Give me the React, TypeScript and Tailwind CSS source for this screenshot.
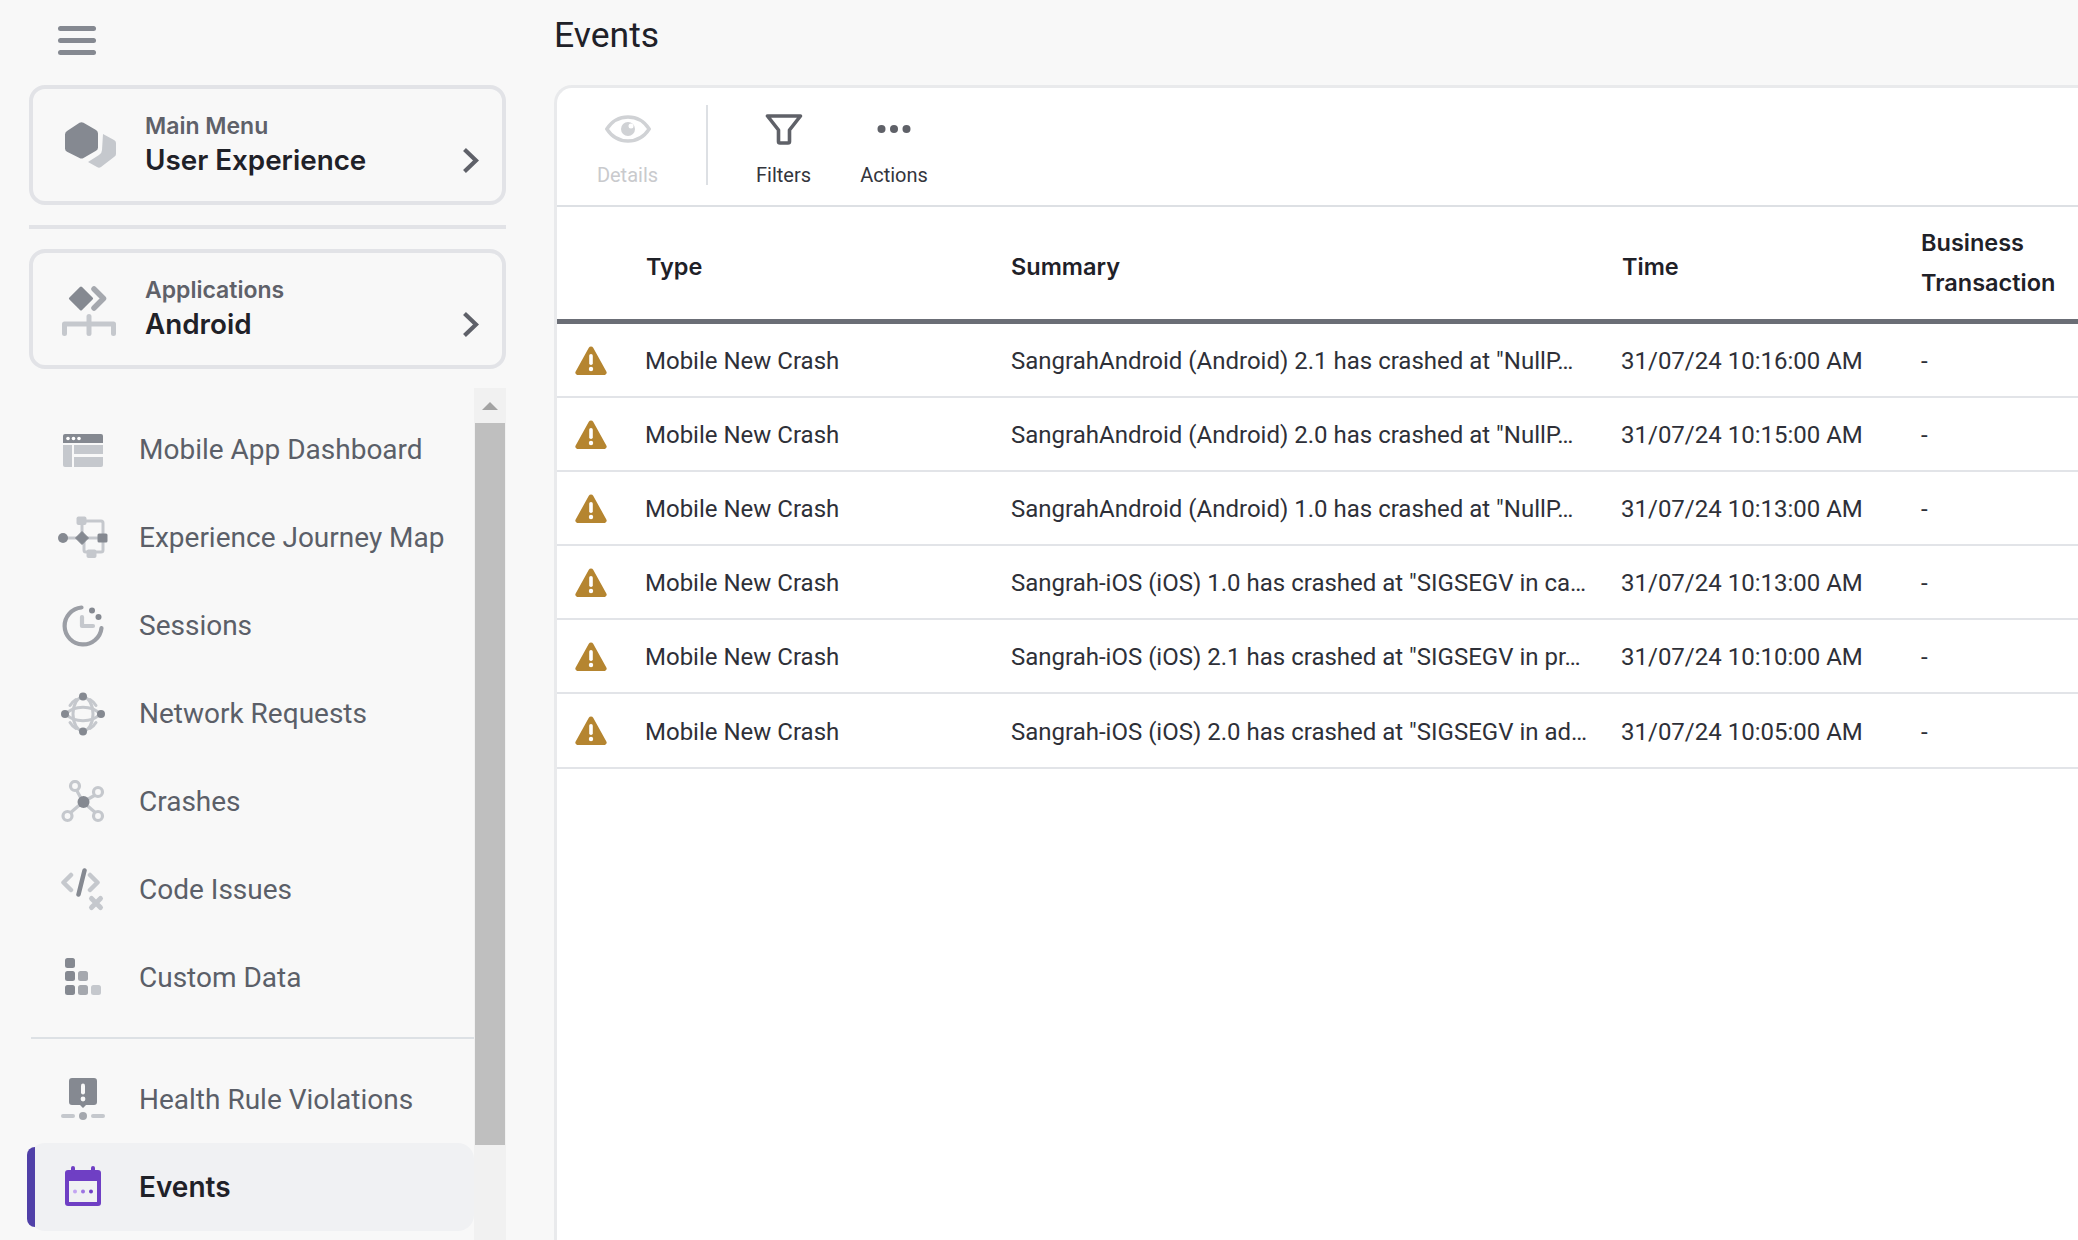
import type { ReactNode } from "react"

const dark = "#858991"
const mid = "#a5a8ae"
const light = "#c5c8cd"

function DashboardIcon() {
  return (
    <svg width="44" height="44" viewBox="0 0 44 44">
      <path d="M2 8a2 2 0 0 1 2-2h36a2 2 0 0 1 2 2v7H2z" fill={dark} />
      <circle cx="7" cy="10.500" r="1.800" fill="#fff" />
      <circle cx="12.500" cy="10.500" r="1.800" fill="#fff" />
      <circle cx="18" cy="10.500" r="1.800" fill="#fff" />
      <path d="M2 17h9v22H4a2 2 0 0 1-2-2z" fill={light} />
      <rect x="13" y="17" width="29" height="9" fill={light} />
      <path d="M13 29h29v8a2 2 0 0 1-2 2H13z" fill={light} />
    </svg>
  )
}

function JourneyIcon() {
  return (
    <svg width="50" height="44" viewBox="0 0 50 44">
      <path d="M26 5h17a2 2 0 0 1 2 2v27a2 2 0 0 1-2 2H28a2 2 0 0 1-2-2v-9M24 21V5" fill="none" stroke={light} strokeWidth="3" />
      <path d="M6 22h40" stroke={light} strokeWidth="3" />
      <circle cx="5" cy="22" r="5" fill={dark} />
      <path d="M24 15.500l6.500 6.500-6.500 6.500-6.500-6.500z" fill={dark} stroke={dark} strokeLinejoin="round" />
      <rect x="39.500" y="17.500" width="10" height="9" rx="1.500" fill={dark} />
      <rect x="18.500" y="0.500" width="10" height="8.500" rx="2" fill={light} />
      <rect x="28.500" y="33.500" width="10" height="8.500" rx="2" fill={light} />
    </svg>
  )
}

function SessionsIcon() {
  return (
    <svg width="44" height="44" viewBox="0 0 44 44">
      <path d="M20.500 3.500A18.500 18.500 0 1 0 40.500 24" fill="none" stroke="#9b9ea5" strokeWidth="4.200" strokeLinecap="round" />
      <path d="M21 13v9h11" fill="none" stroke={light} strokeWidth="4.200" strokeLinecap="round" strokeLinejoin="round" />
      <circle cx="31" cy="6.500" r="3" fill={dark} />
      <circle cx="37.500" cy="13" r="3" fill={dark} />
    </svg>
  )
}

function NetworkIcon() {
  return (
    <svg width="44" height="44" viewBox="0 0 44 44">
      <g fill="none" stroke={light} strokeWidth="3" strokeLinecap="round">
        <path d="M9 13.500C10.500 11 12.500 9 15 7.500M29 7.500C31.500 9 33.500 11 35 13.500M9 30.500C10.500 33 12.500 35 15 36.500M29 36.500C31.500 35 33.500 33 35 30.500" />
        <ellipse cx="22" cy="22" rx="10" ry="17" />
        <path d="M5 22C13 13 31 13 39 22M5 22C13 31 31 31 39 22" />
      </g>
      <circle cx="22" cy="4.500" r="4" fill={dark} />
      <circle cx="22" cy="39.500" r="4" fill={dark} />
      <circle cx="4" cy="22" r="4" fill={dark} />
      <circle cx="40" cy="22" r="4" fill={dark} />
    </svg>
  )
}

function CrashesIcon() {
  return (
    <svg width="44" height="44" viewBox="0 0 44 44" fill="none" stroke={light} strokeWidth="3.200">
      <path d="M22 22L15 9M22 22l14-8M22 22L8 34M22 22l14 12" />
      <circle cx="14" cy="6" r="4.500" fill="#f8f8f8" />
      <circle cx="37" cy="12" r="4.500" fill="#f8f8f8" />
      <circle cx="6.500" cy="36" r="4.500" fill="#f8f8f8" />
      <circle cx="37" cy="36" r="4.500" fill="#f8f8f8" />
      <circle cx="22.500" cy="22" r="6" fill={dark} stroke="none" />
    </svg>
  )
}

function CodeIcon() {
  return (
    <svg width="44" height="44" viewBox="0 0 44 44" fill="none" strokeLinecap="round" strokeLinejoin="round">
      <path d="M10 7l-7.500 7.500 7.500 7.500M29 7l7.500 7.500-7.500 7.500" stroke={light} strokeWidth="4.500" />
      <path d="M23.500 2.500l-6 24" stroke={dark} strokeWidth="4.500" />
      <path d="M30.500 30.500l9 9M39.500 30.500l-9 9" stroke={light} strokeWidth="5" />
    </svg>
  )
}

function CustomDataIcon() {
  return (
    <svg width="44" height="44" viewBox="0 0 44 44">
      <rect x="4" y="2" width="10" height="10" rx="2.500" fill={dark} />
      <rect x="4" y="15" width="10" height="10" rx="2.500" fill={dark} />
      <rect x="17" y="15" width="10" height="10" rx="2.500" fill={mid} />
      <rect x="4" y="29" width="10" height="10" rx="2.500" fill={dark} />
      <rect x="17" y="29" width="10" height="10" rx="2.500" fill={mid} />
      <rect x="30" y="29" width="10" height="10" rx="2.500" fill={light} />
    </svg>
  )
}

function HealthIcon() {
  return (
    <svg width="44" height="46" viewBox="0 0 44 46">
      <path d="M11 1h22a3 3 0 0 1 3 3v21a3 3 0 0 1-3 3h-8l-3 3-3-3h-8a3 3 0 0 1-3-3V4a3 3 0 0 1 3-3z" fill={dark} />
      <rect x="20" y="6.500" width="4" height="11" rx="2" fill="#f8f8f8" />
      <circle cx="22" cy="22" r="2.400" fill="#f8f8f8" />
      <rect x="0" y="37" width="14" height="4" rx="2" fill={light} />
      <rect x="30" y="37" width="14" height="4" rx="2" fill={light} />
      <circle cx="22" cy="39" r="4" fill={mid} />
    </svg>
  )
}

function EventsIcon() {
  return (
    <svg width="44" height="44" viewBox="0 0 44 44">
      <rect x="4" y="5" width="36" height="36" rx="3" fill="#6f3fc4" />
      <rect x="10" y="1" width="4" height="8" rx="2" fill="#6f3fc4" />
      <rect x="30" y="1" width="4" height="8" rx="2" fill="#6f3fc4" />
      <rect x="8" y="16" width="28" height="21" fill="#f0f1f3" />
      <circle cx="14" cy="26.500" r="2" fill="#c3a5f2" />
      <circle cx="22" cy="26.500" r="2" fill="#9c74e2" />
      <circle cx="30" cy="26.500" r="2" fill="#6f3fc4" />
    </svg>
  )
}

function HexIcon() {
  return (
    <svg width="54" height="46" viewBox="-3 0 54 46">
      <path d="M38 12l11 6q2 1.200 2 3v11q0 2-2 3L36 45q-2 1.500-4 0l-9-5 11-7q3-2 3-5z" fill={light} />
      <path d="M14.500 0.800q2-1 4 0l12.500 7.200q2 1.200 2 3.400v14q0 2.200-2 3.400l-12.500 7.200q-2 1-4 0L2 29.800q-2-1.200-2-3.400v-14q0-2.200 2-3.400z" fill={dark} />
    </svg>
  )
}

function AppsIcon() {
  return (
    <svg width="54" height="50" viewBox="0 0 54 50" fill="none" className="mt-[4px]">
      <path d="M19 2l10.500 10.500L19 23 8.500 12.500z" fill={dark} stroke={dark} strokeWidth="3" strokeLinejoin="round" />
      <path d="M32 3l9.500 9.500L32 22" stroke={mid} strokeWidth="5.500" strokeLinejoin="round" strokeLinecap="round" />
      <path d="M2.500 47.500V38h49v9.500M27 30.500v17" stroke={light} strokeWidth="5" strokeLinecap="round" strokeLinejoin="round" />
    </svg>
  )
}

function Chevron() {
  return (
    <svg width="17" height="27" viewBox="0 0 17 27" fill="none" className="mt-[31px] shrink-0">
      <path d="M2.500 2.500L14 13.500 2.500 24.500" stroke="#5f6169" strokeWidth="4.200" />
    </svg>
  )
}

function WarningIcon() {
  return (
    <svg width="32" height="29" viewBox="0 0 32 29">
      <path d="M13.800 1.800a2.600 2.600 0 0 1 4.400 0l13 23.400A2.400 2.400 0 0 1 29 29H3a2.400 2.400 0 0 1-2.200-3.800z" fill="#b58530" />
      <rect x="14.200" y="8" width="3.600" height="11" rx="1.800" fill="#fff" />
      <circle cx="16" cy="23" r="2.200" fill="#fff" />
    </svg>
  )
}

function EyeIcon() {
  return (
    <svg width="46" height="28" viewBox="0 0 46 28">
      <path d="M1.800 14C7 6 14 2 23 2s16 4 21.200 12C39 22 32 26 23 26S7 22 1.800 14z" fill="none" stroke="#d0d2d5" strokeWidth="3.400" />
      <circle cx="23" cy="14" r="7" fill="#d0d2d5" />
      <circle cx="26" cy="11" r="2.500" fill="#fff" />
    </svg>
  )
}

function FilterIcon() {
  return (
    <svg width="38" height="32" viewBox="0 0 38 32" fill="none">
      <path d="M2.500 3h33L24.500 17v11.500a1.500 1.500 0 0 1-1.500 1.500h-8a1.500 1.500 0 0 1-1.500-1.500V17z" stroke="#5f6168" strokeWidth="3.600" strokeLinejoin="round" />
    </svg>
  )
}

function DotsIcon() {
  return (
    <svg width="34" height="10" viewBox="0 0 34 10">
      <circle cx="4.500" cy="5" r="4" fill="#5f6168" />
      <circle cx="17" cy="5" r="4" fill="#5f6168" />
      <circle cx="29.500" cy="5" r="4" fill="#5f6168" />
    </svg>
  )
}

function SwitcherCard({ icon, label, title }: { icon: ReactNode; label: string; title: string }) {
  return (
    <div className="h-[120px] rounded-[16px] border-[4px] border-[#e2e3e7] flex items-center pl-[29px] pr-[23px]">
      <div className="w-[54px] flex justify-center shrink-0">{icon}</div>
      <div className="ml-[29px] flex-1 -mt-[2px] font-['Inter',sans-serif] font-semibold">
        <div className="text-[23px] leading-[32px] text-[#5f6169]">{label}</div>
        <div className="text-[27.800px] leading-[36px] text-[#1f2128]">{title}</div>
      </div>
      <Chevron />
    </div>
  )
}

function NavItem({ icon, label }: { icon: ReactNode; label: string }) {
  return (
    <div className="h-[88px] flex items-center">
      <div className="w-[108px] mr-[2px] flex justify-center shrink-0">{icon}</div>
      <span className="text-[28px] text-[#5b5f68]">{label}</span>
    </div>
  )
}

const rows = [
  { summary: 'SangrahAndroid (Android) 2.1 has crashed at "NullP…', time: "31/07/24 10:16:00 AM" },
  { summary: 'SangrahAndroid (Android) 2.0 has crashed at "NullP…', time: "31/07/24 10:15:00 AM" },
  { summary: 'SangrahAndroid (Android) 1.0 has crashed at "NullP…', time: "31/07/24 10:13:00 AM" },
  { summary: 'Sangrah-iOS (iOS) 1.0 has crashed at "SIGSEGV in ca…', time: "31/07/24 10:13:00 AM" },
  { summary: 'Sangrah-iOS (iOS) 2.1 has crashed at "SIGSEGV in pr…', time: "31/07/24 10:10:00 AM" },
  { summary: 'Sangrah-iOS (iOS) 2.0 has crashed at "SIGSEGV in ad…', time: "31/07/24 10:05:00 AM" },
]

const gridCols = "grid grid-cols-[89px_365px_611px_299px_1fr] items-center"

export default function App() {
  return (
    <div className="h-[1240px] w-[2078px] overflow-hidden flex bg-[#f8f8f8] font-['Roboto',sans-serif]">
      <aside className="w-[554px] shrink-0 flex flex-col pl-[29px]">
        <div className="w-[477px] h-[85px] shrink-0 pl-[29px] pt-[26px]">
          <div className="w-[38px] flex flex-col gap-[7px]">
            <div className="h-[5px] rounded-full bg-[#858991]" />
            <div className="h-[5px] rounded-full bg-[#858991]" />
            <div className="h-[5px] rounded-full bg-[#858991]" />
          </div>
        </div>
        <div className="w-[477px]">
          <SwitcherCard icon={<HexIcon />} label="Main Menu" title="User Experience" />
          <div className="h-[4px] bg-[#e2e3e7] mt-[20px] mb-[20px]" />
          <SwitcherCard icon={<AppsIcon />} label="Applications" title="Android" />
        </div>
        <div className="w-[477px] mt-[19px] flex-1 flex min-h-0">
          <nav className="w-[445px] pt-[18px]">
            <NavItem icon={<DashboardIcon />} label="Mobile App Dashboard" />
            <NavItem icon={<JourneyIcon />} label="Experience Journey Map" />
            <NavItem icon={<SessionsIcon />} label="Sessions" />
            <NavItem icon={<NetworkIcon />} label="Network Requests" />
            <NavItem icon={<CrashesIcon />} label="Crashes" />
            <NavItem icon={<CodeIcon />} label="Code Issues" />
            <NavItem icon={<CustomDataIcon />} label="Custom Data" />
            <div className="h-[2px] bg-[#dde1e5] mt-[15px] mb-[17px] ml-[2px]" />
            <NavItem icon={<HealthIcon />} label="Health Rule Violations" />
            <div className="relative h-[88px] -mt-[1px] rounded-[16px] bg-[#f0f1f3] flex items-center">
              <div className="absolute -left-[2px] top-[4px] bottom-[4px] w-[8px] rounded-l-full bg-[#5040a8]" />
              <div className="w-[108px] mr-[2px] flex justify-center shrink-0">
                <EventsIcon />
              </div>
              <span className="text-[28px] font-semibold font-['Inter',sans-serif] text-[#1f2128]">Events</span>
            </div>
          </nav>
          <div className="w-[32px] bg-[#f1f1f1] flex flex-col items-center">
            <div className="h-[35px] flex items-center justify-center shrink-0">
              <div className="w-0 h-0 border-x-[8px] border-x-transparent border-b-[8px] border-b-[#a3a3a3]" />
            </div>
            <div className="w-[30px] h-[722px] bg-[#bfbfbf]" />
          </div>
        </div>
      </aside>

      <main className="flex-1 min-w-0 flex flex-col">
        <h1 className="h-[85px] shrink-0 pt-[14px] text-[35.500px] leading-[42px] font-normal text-[#1f2128]">Events</h1>
        <div className="flex-1 bg-white rounded-tl-[18px] border-l-[3px] border-t-[3px] border-[#e9eaec]">
          <div className="h-[119px] flex items-stretch border-b-[2px] border-[#dde0e4]">
            <div className="w-[149px] pr-[8px] flex flex-col items-center">
              <div className="h-[54px] mt-[14px] flex items-center justify-center"><EyeIcon /></div>
              <span className="text-[20px] leading-[30px] mt-[4px] text-[#c9cacd]">Details</span>
            </div>
            <div className="w-[2px] mt-[17px] mb-[20px] bg-[#dde0e4]" />
            <div className="w-[151px] flex flex-col items-center">
              <div className="h-[54px] mt-[14px] flex items-center justify-center"><FilterIcon /></div>
              <span className="text-[20px] leading-[30px] mt-[4px] text-[#33353c]">Filters</span>
            </div>
            <div className="w-[70px] flex flex-col items-center">
              <div className="h-[54px] mt-[14px] flex items-center justify-center"><DotsIcon /></div>
              <span className="text-[20px] leading-[30px] mt-[4px] text-[#33353c]">Actions</span>
            </div>
          </div>
          <div className={`${gridCols} h-[117px] border-b-[5px] border-[#6b6e76] text-[23.500px] font-semibold font-['Inter',sans-serif] text-[#1f2128]`}>
            <div />
            <div className="pt-[8px]">Type</div>
            <div className="pt-[8px]">Summary</div>
            <div className="pt-[8px]">Time</div>
            <div className="leading-[40px]">Business<br />Transaction</div>
          </div>
          {rows.map((row) => (
            <div key={row.time + row.summary} className={`${gridCols} h-[74.100px] border-b-[2px] border-[#e2e4e8] text-[24px] text-[#2e3038]`}>
              <div className="pl-[18px] flex"><WarningIcon /></div>
              <div className="pt-[2px] -ml-[1px]">Mobile New Crash</div>
              <div className="pt-[2px]">{row.summary}</div>
              <div className="pt-[2px] -ml-[1px]">{row.time}</div>
              <div className="pt-[2px]">-</div>
            </div>
          ))}
        </div>
      </main>
    </div>
  )
}
